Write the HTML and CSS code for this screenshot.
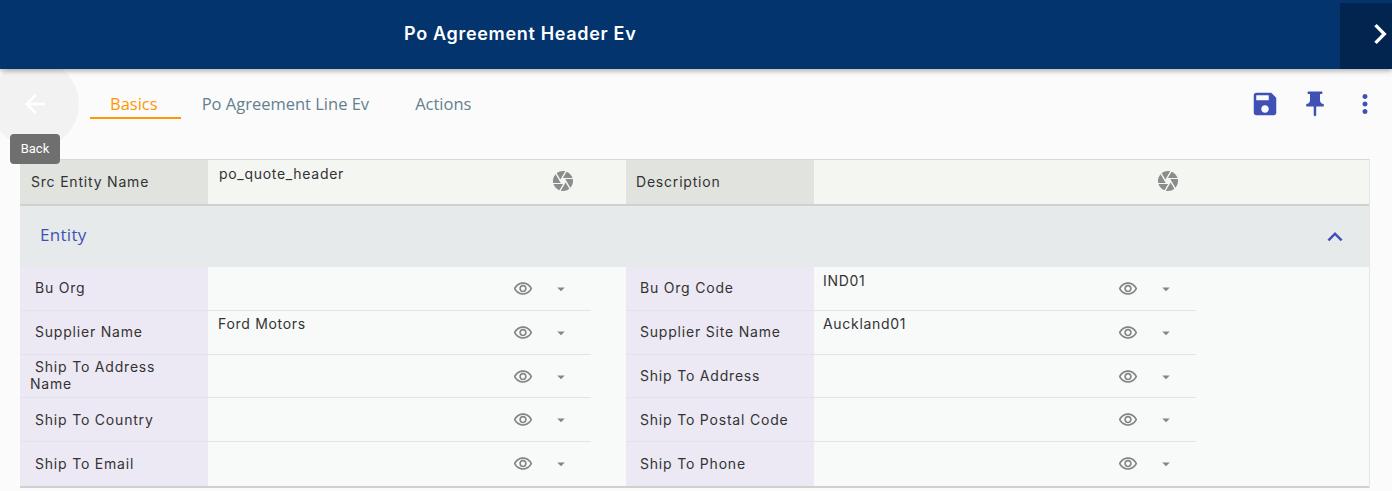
FILE: index.html
```html
<!DOCTYPE html>
<html lang="en">
<head>
  <meta charset="UTF-8" />
  <title>Po Agreement Header Ev</title>
  <link rel="stylesheet" href="styles.css">
</head>
<body>
  <svg class="defs" aria-hidden="true">
    <symbol id="i-eye" viewBox="0 0 24 24"><path d="M12 6c3.79 0 7.17 2.13 8.82 5.5C19.17 14.87 15.79 17 12 17s-7.17-2.13-8.82-5.5C4.83 8.13 8.21 6 12 6m0-2C7 4 2.73 7.11 1 11.5 2.73 15.89 7 19 12 19s9.27-3.11 11-7.5C21.27 7.11 17 4 12 4zm0 5c1.38 0 2.5 1.12 2.5 2.5S13.38 14 12 14s-2.5-1.12-2.5-2.5S10.62 9 12 9m0-2c-2.48 0-4.5 2.02-4.5 4.5S9.52 16 12 16s4.5-2.02 4.5-4.5S14.48 7 12 7z"/></symbol>
    <symbol id="i-drop" viewBox="0 0 24 24"><path d="M7 10l5 5 5-5z"/></symbol>
    <symbol id="i-camera" viewBox="0 0 24 24"><path d="M9.4 10.5l4.77-8.26C13.47 2.09 12.75 2 12 2c-2.4 0-4.6.85-6.32 2.25l3.66 6.35.06-.1zM21.54 9c-.92-2.92-3.15-5.26-6-6.34L11.88 9h9.66zm.26 1h-7.49l.29.5 4.76 8.25C21 16.97 22 14.61 22 12c0-.69-.07-1.35-.2-2zM8.54 12l-3.9-6.75C3.01 7.03 2 9.39 2 12c0 .69.07 1.35.2 2h7.49l-1.15-2zm-6.08 3c.92 2.92 3.15 5.26 6 6.34L12.12 15H2.46zm11.27 0l-3.9 6.76c.7.15 1.42.24 2.17.24 2.4 0 4.6-.85 6.32-2.25l-3.66-6.35-.93 1.6z"/></symbol>
  </svg>

  <header class="topbar">
    <h1 class="title">Po Agreement Header Ev</h1>
    <div class="next">
      <svg viewBox="0 0 24 24"><path d="M10 6L8.59 7.41 13.17 12l-4.58 4.59L10 18l6-6z"/></svg>
    </div>
  </header>

  <div class="back-circle">
    <svg viewBox="0 0 24 24"><path d="M20 11H7.83l5.59-5.59L12 4l-8 8 8 8 1.41-1.41L7.83 13H20v-2z"/></svg>
  </div>
  <div class="tooltip">Back</div>

  <nav class="toolbar">
    <div class="tabs">
      <a class="tab active">Basics</a>
      <a class="tab">Po Agreement Line Ev</a>
      <a class="tab">Actions</a>
    </div>
    <div class="actions">
      <svg class="act save" viewBox="0 0 24 24"><path d="M17 3H5c-1.11 0-2 .9-2 2v14c0 1.1.89 2 2 2h14c1.1 0 2-.9 2-2V7l-4-4zm-5 16c-1.66 0-3-1.34-3-3s1.34-3 3-3 3 1.34 3 3-1.34 3-3 3zm3-10H5V5h10v4z"/></svg>
      <svg class="act pin" viewBox="0 0 24 24"><path d="M16 9V4h1c.55 0 1-.45 1-1s-.45-1-1-1H7c-.55 0-1 .45-1 1s.45 1 1 1h1v5c0 1.66-1.34 3-3 3v2h5.97v7l1 1 1-1v-7H19v-2c-1.66 0-3-1.34-3-3z"/></svg>
      <svg class="act more" viewBox="0 0 24 24"><path d="M12 8c1.1 0 2-.9 2-2s-.9-2-2-2-2 .9-2 2 .9 2 2 2zm0 2c-1.1 0-2 .9-2 2s.9 2 2 2 2-.9 2-2-.9-2-2-2zm0 6c-1.1 0-2 .9-2 2s.9 2 2 2 2-.9 2-2-.9-2-2-2z"/></svg>
    </div>
  </nav>

  <main class="panel">
    <section class="head-row">
      <div class="pair">
        <div class="label grey">Src Entity Name</div>
        <div class="value"><span class="val-text">po_quote_header</span><svg class="camera"><use href="#i-camera"/></svg></div>
      </div>
      <div class="pair">
        <div class="label grey">Description</div>
        <div class="value"><span class="val-text"></span><svg class="camera"><use href="#i-camera"/></svg></div>
      </div>
    </section>

    <section class="group">
      <h2>Entity</h2>
      <svg class="collapse" viewBox="0 0 24 24"><path d="M12 8l-6 6 1.41 1.41L12 10.83l4.59 4.58L18 14z"/></svg>
    </section>

    <section class="rows">
      <div class="row">
        <div class="pair"><div class="label">Bu Org</div><div class="value"><span class="val-text"></span><svg class="eye"><use href="#i-eye"/></svg><svg class="drop"><use href="#i-drop"/></svg></div></div>
        <div class="pair"><div class="label">Bu Org Code</div><div class="value"><span class="val-text">IND01</span><svg class="eye"><use href="#i-eye"/></svg><svg class="drop"><use href="#i-drop"/></svg></div></div>
      </div>
      <div class="row">
        <div class="pair"><div class="label">Supplier Name</div><div class="value"><span class="val-text">Ford Motors</span><svg class="eye"><use href="#i-eye"/></svg><svg class="drop"><use href="#i-drop"/></svg></div></div>
        <div class="pair"><div class="label">Supplier Site Name</div><div class="value"><span class="val-text">Auckland01</span><svg class="eye"><use href="#i-eye"/></svg><svg class="drop"><use href="#i-drop"/></svg></div></div>
      </div>
      <div class="row">
        <div class="pair"><div class="label wrap"><span>Ship To Address</span><br>Name</div><div class="value"><span class="val-text"></span><svg class="eye"><use href="#i-eye"/></svg><svg class="drop"><use href="#i-drop"/></svg></div></div>
        <div class="pair"><div class="label">Ship To Address</div><div class="value"><span class="val-text"></span><svg class="eye"><use href="#i-eye"/></svg><svg class="drop"><use href="#i-drop"/></svg></div></div>
      </div>
      <div class="row">
        <div class="pair"><div class="label">Ship To Country</div><div class="value"><span class="val-text"></span><svg class="eye"><use href="#i-eye"/></svg><svg class="drop"><use href="#i-drop"/></svg></div></div>
        <div class="pair"><div class="label">Ship To Postal Code</div><div class="value"><span class="val-text"></span><svg class="eye"><use href="#i-eye"/></svg><svg class="drop"><use href="#i-drop"/></svg></div></div>
      </div>
      <div class="row">
        <div class="pair"><div class="label">Ship To Email</div><div class="value"><span class="val-text"></span><svg class="eye"><use href="#i-eye"/></svg><svg class="drop"><use href="#i-drop"/></svg></div></div>
        <div class="pair"><div class="label">Ship To Phone</div><div class="value"><span class="val-text"></span><svg class="eye"><use href="#i-eye"/></svg><svg class="drop"><use href="#i-drop"/></svg></div></div>
      </div>
    </section>
  </main>
</body>
</html>
```

FILE: styles.css
```css
html, body {
  height: 491px;
  overflow: hidden;
}
body {
  margin: 0;
  background-color: #fbfbfb;
  color: #333;
  font-family: Inter, "Noto Sans", sans-serif;
}
.defs {
  display: none;
}

.topbar {
  position: relative;
  z-index: 3;
  height: 69px;
  background-color: #03346e;
  box-shadow: 0 2px 5px rgba(0, 0, 0, 0.3);
  display: flex;
  align-items: center;
  justify-content: space-between;
}
.title {
  margin: 0 0 2px 404px;
  color: #fff;
  font-size: 18px;
  font-weight: 600;
  letter-spacing: 0.68px;
}
.next {
  width: 52px;
  height: 66px;
  margin-top: 3px;
  background-color: #02254f;
  display: flex;
  align-items: center;
  justify-content: flex-end;
}
.next svg {
  width: 40px;
  height: 40px;
  margin: -4px -8px 0 0;
  fill: #fff;
}

.back-circle {
  position: absolute;
  left: -9px;
  top: 60px;
  width: 88px;
  height: 88px;
  border-radius: 50%;
  background-color: #f2f2f2;
  display: flex;
  align-items: center;
  justify-content: center;
}
.back-circle svg {
  width: 30px;
  height: 30px;
  fill: #fff;
}
.tooltip {
  position: absolute;
  z-index: 2;
  left: 10px;
  top: 134px;
  width: 50px;
  height: 30px;
  border-radius: 4px;
  background-color: #6f6f6f;
  color: #fff;
  font-family: Roboto, sans-serif;
  font-size: 13px;
  line-height: 30px;
  text-align: center;
}

.toolbar {
  position: relative;
  height: 90px;
  display: flex;
  justify-content: space-between;
}
.tabs {
  display: flex;
  margin: 19px 0 0 90px;
  font-family: "Open Sans", sans-serif;
  font-size: 16.5px;
  color: #64808f;
}
.tab {
  height: 29px;
  line-height: 32px;
  padding: 0 26px 0 20px;
}
.tab.active {
  padding-right: 23px;
  margin-right: 1px;
  color: #ff9800;
  border-bottom: 2px solid #ff9800;
}
.actions {
  display: flex;
}
.act {
  position: absolute;
  top: 20px;
  width: 30px;
  height: 30px;
  fill: #3f51b5;
}
.save {
  left: 1250px;
}
.pin {
  left: 1300px;
}
.more {
  left: 1350px;
}

.panel {
  margin: 0 22px 0 20px;
  border-top: 1px solid #d8d8d8;
  border-right: 1px solid #e4e6e6;
  background-color: #f8fafa;
}
.head-row {
  display: flex;
  height: 44px;
  background-color: #f4f6f2;
  border-bottom: 2px solid #cfd1cf;
}
.pair {
  display: flex;
  width: 571px;
}
.pair + .pair {
  width: 570px;
  margin-left: 35px;
}
.label {
  width: 188px;
  padding: 0 0 1px 15px;
  box-sizing: border-box;
  display: flex;
  align-items: center;
  font-size: 14px;
  letter-spacing: 0.8px;
  color: #333;
  background-color: #ece9f4;
}
.pair + .pair .label {
  padding-left: 14px;
}
.label.grey {
  padding: 0 0 2px 11px;
  background-color: #e1e3de;
}
.pair + .pair .label.grey {
  padding-left: 10px;
}
.label.wrap {
  display: block;
  padding: 3px 0 0 10px;
  line-height: 17px;
}
.label.wrap span {
  margin-left: 5px;
}
.value {
  width: 383px;
  position: relative;
  font-size: 14px;
  letter-spacing: 0.7px;
}
.pair + .pair .value {
  width: 382px;
}
.pair + .pair .value > * {
  margin-left: -1px;
}
.val-text {
  position: absolute;
  left: 10px;
  top: 3.5px;
  line-height: 20px;
}
.head-row .val-text {
  left: 11px;
  top: 4px;
}
.camera {
  position: absolute;
  left: 343px;
  top: 9px;
  width: 24px;
  height: 24px;
  fill: #8c8c8c;
}

.group {
  height: 61px;
  background-color: #e7eaeb;
  display: flex;
  align-items: center;
  justify-content: space-between;
}
.group h2 {
  margin: 0 0 5px 20px;
  font-family: "Open Sans", sans-serif;
  font-size: 17px;
  font-weight: 400;
  letter-spacing: 0.3px;
  color: #3f51b5;
}
.collapse {
  width: 30px;
  height: 30px;
  margin-right: 19px;
  fill: #3f51b5;
}

.rows {
  border-bottom: 2px solid #cfd1cf;
}
.row {
  display: flex;
  height: 43.75px;
}
.row .pair {
  border-bottom: 1px solid #e2e2ea;
  box-sizing: border-box;
}
.row:last-child .pair {
  border-bottom: none;
}
.eye {
  position: absolute;
  left: 305px;
  top: 12px;
  width: 20px;
  height: 20px;
  fill: #858585;
}
.drop {
  position: absolute;
  left: 344px;
  top: 13px;
  width: 18px;
  height: 18px;
  fill: #858585;
}
```
